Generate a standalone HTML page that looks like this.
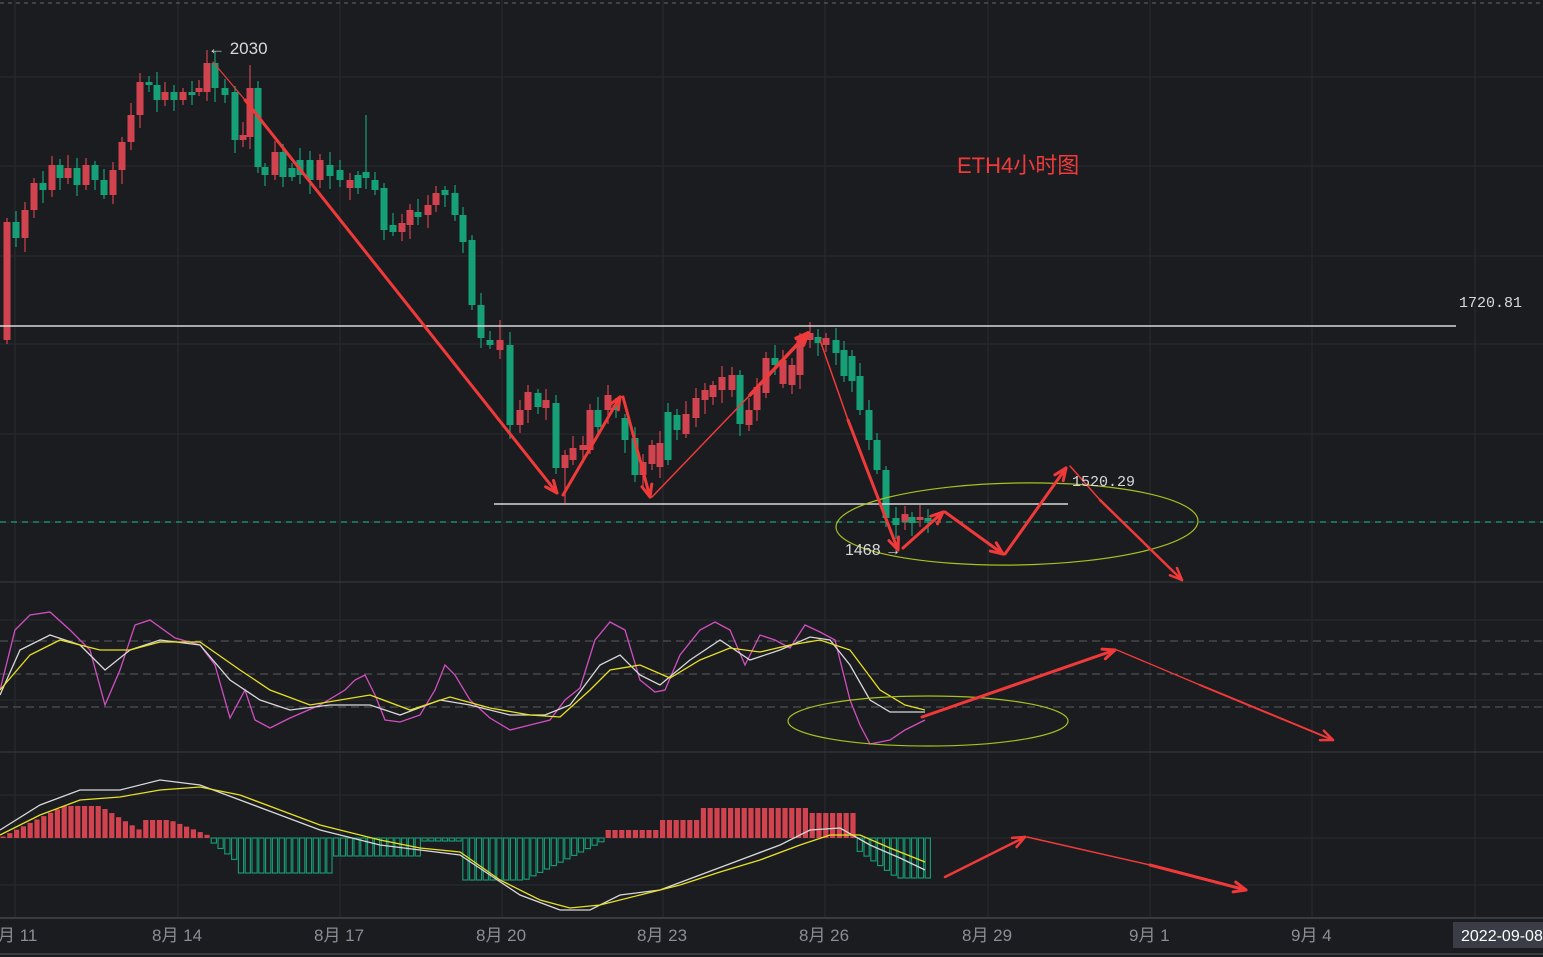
<!DOCTYPE html>
<html><head><meta charset="utf-8"><style>
html,body{margin:0;padding:0;background:#1b1c20;overflow:hidden}
svg{display:block}
text{font-family:"Liberation Sans","Noto Sans CJK SC",sans-serif}
text.mono{font-family:"Liberation Mono",monospace}
</style></head><body>
<svg id="s" width="1543" height="957" xmlns="http://www.w3.org/2000/svg">
<rect width="1543" height="957" fill="#1b1c20"/>
<g id="grid" stroke="#2a2b30" stroke-width="1"></g>
<line x1="0" y1="3" x2="1543" y2="3" stroke="#666" stroke-dasharray="4,4"/>
<g id="candles"></g>
<line x1="0" y1="326" x2="1456" y2="326" stroke="#d8d8d8" stroke-width="1.5"/>
<text class="mono" x="1459" y="307" fill="#d8d8d8" font-size="15">1720.81</text>
<line x1="494" y1="504" x2="1068" y2="504" stroke="#d8d8d8" stroke-width="1.5"/>
<line x1="0" y1="522" x2="1543" y2="522" stroke="#17a37b" stroke-width="1.2" stroke-dasharray="6,5"/>
<line x1="0" y1="582" x2="1543" y2="582" stroke="#3a3b40"/>
<line x1="0" y1="752" x2="1543" y2="752" stroke="#3a3b40"/>
<line x1="0" y1="918" x2="1543" y2="918" stroke="#3a3b40" stroke-width="2"/>
<line x1="0" y1="954" x2="1543" y2="954" stroke="#3a3b40" stroke-width="2"/>
<g stroke="#5a5b60" stroke-dasharray="8,5"><line x1="0" y1="641" x2="1543" y2="641"/><line x1="0" y1="674" x2="1543" y2="674"/><line x1="0" y1="707" x2="1543" y2="707"/></g>
<g id="hist"></g>
<g fill="none" stroke-width="1.3">
<polyline stroke="#d04fc0" points="0,690 15,630 30,615 50,612 70,630 90,650 105,705 120,670 135,625 150,620 175,638 200,645 215,665 230,718 245,690 255,720 270,728 290,718 320,705 345,690 355,680 365,675 375,695 385,720 400,722 420,715 435,690 445,665 455,675 470,700 490,718 510,730 530,725 550,720 565,700 580,688 595,640 610,622 625,630 640,680 655,692 665,690 680,655 700,630 715,622 730,630 745,665 760,635 775,640 790,648 805,625 820,632 835,640 850,700 860,725 870,744 890,740 905,730 925,720"/>
<polyline stroke="#d8d8d8" points="0,695 20,650 50,635 80,645 105,670 130,650 160,640 200,645 230,680 260,700 290,710 330,705 370,705 400,715 440,700 470,705 510,715 545,715 570,705 600,665 620,655 640,675 660,685 690,660 720,640 750,660 780,650 810,637 830,640 850,665 870,700 890,712 925,712"/>
<polyline stroke="#e8e020" points="0,690 30,655 60,640 100,650 130,650 160,642 200,642 240,670 270,690 310,705 370,695 410,710 450,697 490,708 530,715 560,717 590,690 610,670 640,665 670,678 700,660 730,648 760,652 790,645 820,640 850,650 880,690 905,705 925,710"/>
<polyline stroke="#d8d8d8" points="0,830 40,805 80,790 120,790 160,780 200,785 240,800 280,815 320,830 380,845 420,850 460,855 490,875 520,895 560,910 590,910 620,895 660,890 700,875 740,860 780,845 810,830 840,828 870,845 900,858 925,870"/>
<polyline stroke="#e8e020" points="0,835 40,815 80,800 120,797 160,790 200,787 240,795 280,810 320,825 380,840 420,848 460,852 500,880 540,900 570,908 600,905 640,895 680,885 720,872 760,860 800,845 830,835 860,835 890,848 925,862"/>
</g>
<g fill="none" stroke="#a8c020" stroke-width="1.2">
<ellipse cx="1017" cy="524" rx="181" ry="41" transform="rotate(-1 1017 524)"/>
<ellipse cx="928" cy="721" rx="140" ry="25"/>
</g>
<g id="arrows" stroke="#f03a3a" fill="none" stroke-linecap="round"></g>
<text x="957" y="173" fill="#f03a3a" font-size="22">ETH4小时图</text>
<text x="208" y="54" fill="#d8d8d8" font-size="17">← 2030</text>
<text class="mono" x="1072" y="486" fill="#d8d8d8" font-size="15">1520.29</text>
<text x="845" y="555" fill="#d8d8d8" font-size="16">1468 →</text>
<g fill="#8a8d95" font-size="17">
<text x="-2" y="941">月 11</text><text x="152" y="941">8月 14</text><text x="314" y="941">8月 17</text><text x="476" y="941">8月 20</text><text x="637" y="941">8月 23</text><text x="799" y="941">8月 26</text><text x="962" y="941">8月 29</text><text x="1129" y="941">9月 1</text><text x="1291" y="941">9月 4</text>
</g>
<rect x="1453" y="922" width="90" height="26" fill="#3a3d45"/>
<text x="1461" y="941" fill="#fff" font-size="16">2022-09-08</text>
</svg>
<script>
var NS="http://www.w3.org/2000/svg";
function el(p,t,a){var e=document.createElementNS(NS,t);for(var k in a)e.setAttribute(k,a[k]);p.appendChild(e);return e;}
var g=document.getElementById('grid');
[15,178,340,502,663,825,988,1150,1312,1475].forEach(function(x){el(g,'line',{x1:x,y1:0,x2:x,y2:918});});
[77,166,256,344,434,522,620,700,795,838,885].forEach(function(y){el(g,'line',{x1:0,y1:y,x2:1543,y2:y});});
var d=[[7,340,222],[16,222,238],[25,238,210],[34,210,183],[43,183,190],[52,190,165],[60,165,178],[68,178,168],[77,168,185],[86,185,165],[95,165,180],[104,180,195],[113,195,170],[122,170,142],[131,142,115],[140,115,82],[149,82,85],[157,85,100],[165,100,92],[174,92,100],[183,100,92],[192,92,92],[199,92,88],[207,92,63],[215,63,88],[225,88,95],[235,92,140],[243,140,135],[250,137,88],[258,88,167],[265,167,175],[275,175,152],[283,152,177],[292,168,177],[300,160,175],[310,160,180],[320,180,160],[330,165,176],[340,170,180],[350,188,180],[358,175,188],[366,172,178],[375,180,190],[384,188,230],[393,225,232],[402,232,223],[410,225,210],[418,212,217],[428,215,205],[436,205,193],[445,190,195],[455,193,215],[463,215,242],[472,240,305],[481,305,338],[490,340,345],[500,350,340],[510,345,425],[520,425,410],[528,410,392],[538,393,407],[546,408,400],[556,403,468],[565,468,455],[573,460,448],[583,450,445],[590,450,410],[598,410,427],[608,410,395],[616,405,410],[625,418,440],[635,438,475],[643,475,462],[652,464,445],[660,467,443],[668,412,460],[677,415,430],[686,434,414],[696,418,398],[705,400,390],[713,397,385],[722,390,377],[732,390,375],[740,375,424],[749,425,410],[757,410,387],[766,393,358],[775,358,365],[783,384,360],[792,385,365],[800,375,337],[810,340,333],[818,337,343],[826,345,338],[836,340,353],[844,350,376],[852,356,381],[860,376,410],[869,410,440],[877,440,470],[886,470,518],[896,518,525],[905,522,514],[912,517,523],[920,520,517],[928,518,520]];
var wx={366:115,565:503,872:340,500:320,250:65,207:50,455:185,777:350};
var c=document.getElementById('candles');
d.forEach(function(a,i){var x=a[0],o=a[1],cl=a[2];var red=cl<o;var col=red?'#d1434f':'#15a077';var top=Math.min(o,cl),bot=Math.max(o,cl);if(bot-top<3)bot=top+3;
var hi=top-(4+(i*7)%10),lo=bot+(4+(i*5)%11);if(wx[x]!==undefined){if(wx[x]<top)hi=wx[x];else lo=wx[x];}
el(c,'line',{x1:x,y1:hi,x2:x,y2:lo,stroke:col,'stroke-width':1.2});
el(c,'rect',{x:x-3.5,y:top,width:7,height:bot-top,fill:col});});
var h=document.getElementById('hist');
function hv(x){
 if(x<210){return -(x<60?x/2:x<100?32:x<140?32-(x-100)*0.6:x<170?18:Math.max(3,18-(x-170)*0.4));}
 if(x<605){if(x<240)return (x-210)*0.8+2;if(x<330)return 35;if(x<420)return 18;if(x<465)return 3;if(x<525)return 42;return Math.max(1,42-(x-525)*0.5);}
 if(x<855){if(x<660)return -8;if(x<700)return -18;if(x<810)return -30;return -25;}
 return Math.min(40,(x-855)*0.7+10);}
for(var x=3;x<=930;x+=6.8){var v=hv(x);var col=v<0?'#d1434f':'#15a077';
 if(v<0)el(h,'rect',{x:x-2.6,y:838+v,width:5.2,height:-v,fill:col});else el(h,'rect',{x:x-2.6,y:838,width:5.2,height:v,fill:'none',stroke:col,'stroke-width':1.1});}
var ar=document.getElementById('arrows');
function arrow(x1,y1,x2,y2,w){el(ar,'line',{x1:x1,y1:y1,x2:x2,y2:y2,'stroke-width':w});
 var an=Math.atan2(y2-y1,x2-x1),L=13;[0.4,-0.4].forEach(function(s){el(ar,'line',{x1:x2,y1:y2,x2:x2-L*Math.cos(an+s),y2:y2-L*Math.sin(an+s),'stroke-width':Math.max(w,2.5)});});}
function ln(x1,y1,x2,y2,w){el(ar,'line',{x1:x1,y1:y1,x2:x2,y2:y2,'stroke-width':w});}
ln(213,62,245,100,1.2);arrow(245,100,557,493,3);
arrow(563,495,620,397,3);arrow(623,397,650,497,3);
ln(652,497,750,395,1.5);arrow(750,395,808,333,3.5);
ln(820,340,848,420,1.5);arrow(848,420,898,550,3);
arrow(903,548,943,512,3);arrow(945,512,1003,554,3);arrow(1005,554,1066,468,3);
ln(1070,466,1100,500,1.5);arrow(1100,500,1182,580,2.5);
arrow(922,717,1115,650,3);ln(1117,650,1200,685,1.3);arrow(1200,685,1333,740,2);
arrow(945,877,1025,837,2.5);ln(1027,837,1150,865,1.5);arrow(1150,865,1246,890,3);
</script>
</body></html>
